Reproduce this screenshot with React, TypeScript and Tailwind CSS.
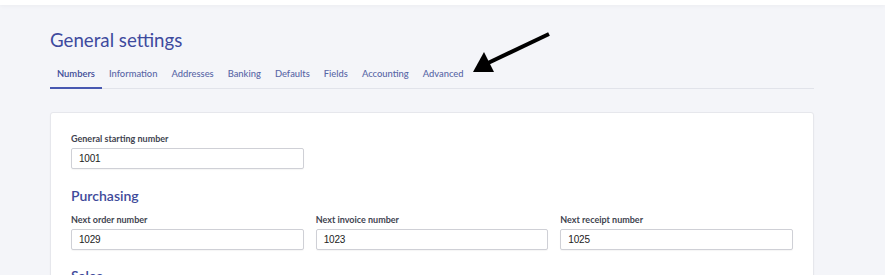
import React from "react";

const tabs = ["Numbers", "Information", "Addresses", "Banking", "Defaults", "Fields", "Accounting", "Advanced"];

function Field({ label, value }: { label: string; value: string }) {
  return (
    <div className="flex flex-col">
      <label className="text-[9px] font-bold text-[#3f4450] leading-[12px] mb-[3px]">
        {label}
      </label>
      <div className="h-[21px] border border-[#cfd0d6] rounded-[2px] bg-white shadow-[0_1px_1px_rgba(0,0,0,0.04)] flex items-center px-[7px] text-[10px] tracking-[-0.2px] text-[#222] font-['Liberation_Sans',Arial,sans-serif]">
        {value}
      </div>
    </div>
  );
}

export default function App() {
  return (
    <div className="w-[885px] h-[275px] overflow-hidden bg-[#f4f5f9] font-['Lato',sans-serif] relative">
      <div className="h-[5px] bg-white shadow-[0_1px_4px_rgba(0,0,0,0.04)]" />
      <div className="ml-[50px] w-[764px]">
        <h1 className="mt-[22px] text-[18.7px] leading-[26px] text-[#3e4a9e] font-normal">General settings</h1>
        <div className="flex border-b border-[#e1e3ea] h-[36px]">
          {tabs.map((t, i) => (
            <div
              key={t}
              className={
                i === 0
                  ? "px-[7px] pt-[14px] text-[9.4px] leading-[14px] font-semibold text-[#3d4c98] border-b-2 border-[#4758b1] -mb-[1px]"
                  : "px-[7px] pt-[14px] text-[9.4px] leading-[14px] font-medium text-[#5866a6]"
              }
            >
              {t}
            </div>
          ))}
        </div>
        <div className="mt-[23px] bg-white border border-[#e6e7ec] rounded-[3px] pt-[20px] px-[20px] pb-[20px] shadow-[0_1px_2px_rgba(0,0,0,0.03)]">
          <div className="grid grid-cols-3 gap-x-[12px]">
            <Field label="General starting number" value="1001" />
          </div>
          <h2 className="mt-[17px] mb-[8px] text-[14px] leading-[20px] font-semibold text-[#3e4a9a]">Purchasing</h2>
          <div className="grid grid-cols-3 gap-x-[12px]">
            <Field label="Next order number" value="1029" />
            <Field label="Next invoice number" value="1023" />
            <Field label="Next receipt number" value="1025" />
          </div>
          <h2 className="mt-[16px] text-[14px] leading-[20px] font-semibold text-[#3e4a9a]">Sales</h2>
        </div>
      </div>
      <svg className="absolute left-0 top-0 pointer-events-none" width="885" height="275">
        <line x1="549" y1="34" x2="488" y2="63" stroke="#000" strokeWidth="4" />
        <polygon points="473,72 484,52 494,72" fill="#000" />
      </svg>
    </div>
  );
}
